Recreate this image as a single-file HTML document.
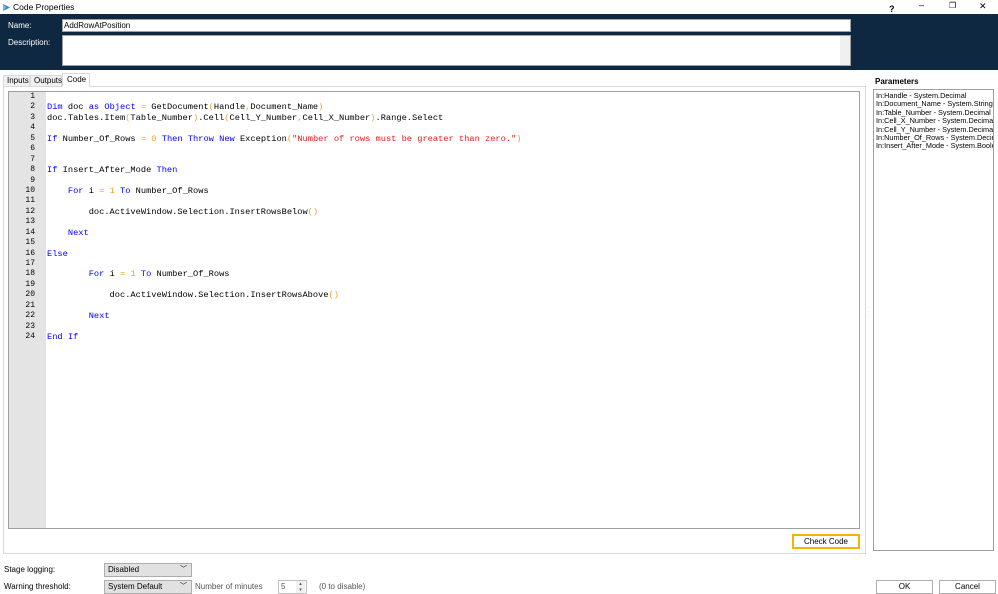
<!DOCTYPE html>
<html><head><style>
*{margin:0;padding:0;box-sizing:border-box}
body{width:998px;height:594px;background:#fff;position:relative;overflow:hidden;font-family:"Liberation Sans",sans-serif;font-size:8px;color:#000}
.a{position:absolute}
.hdr{left:0;top:14px;width:998px;height:56px;background:#0e2841}
.inp{background:#fff;border:1px solid #a0a0a0}
.code{font-family:"Liberation Mono",monospace;font-size:8px;line-height:10.43px;white-space:pre}
.sx{font-size:8.7px;line-height:10.43px}
.k{color:#0000ff}.o{color:#f0a030}.s{color:#e02020}
.btn{background:#fff;border:1px solid #adadad;text-align:center;line-height:12px;font-size:8px}
.sel{background:#e1e1e1;border:1px solid #adadad;padding-left:3px;line-height:12px;font-size:8px}
</style></head><body>
<svg class="a" style="left:2px;top:3px" width="9" height="9" viewBox="0 0 9 9"><path d="M1 1L8 4.5L1 8Z" fill="#2a8ad4"/><path d="M1 1L4 4.5L1 8Z" fill="#6fc0f0"/></svg>
<div class="a" style="left:13px;top:2px;font-size:8.5px">Code Properties</div>
<div class="a" style="left:889px;top:4px;font-size:9px;font-weight:bold">?</div>
<div class="a" style="left:919px;top:0px;font-size:9px">–</div>
<div class="a" style="left:949px;top:1px;font-size:8px">❐</div>
<div class="a" style="left:979px;top:1px;font-size:9px">✕</div>
<div class="a hdr"></div>
<div class="a" style="left:8px;top:21px;color:#fff">Name:</div>
<div class="a inp" style="left:62px;top:19px;width:789px;height:13px;padding-left:1px;line-height:11px">AddRowAtPosition</div>
<div class="a" style="left:8px;top:38px;color:#fff">Description:</div>
<div class="a inp" style="left:62px;top:35px;width:789px;height:31px"><div class="a" style="right:0;top:0;width:10px;height:29px;background:#f0f0f0"></div></div>
<div class="a" style="left:3px;top:86px;width:863px;height:468px;border:1px solid #d9d9d9"></div>
<div class="a" style="left:3px;top:75px;width:27px;height:12px;border:1px solid #d9d9d9;background:#f0f0f0;padding-left:3px;line-height:10px">Inputs</div>
<div class="a" style="left:30px;top:75px;width:32px;height:12px;border:1px solid #d9d9d9;background:#f0f0f0;padding-left:3px;line-height:10px">Outputs</div>
<div class="a" style="left:62px;top:73px;width:28px;height:14px;border:1px solid #d9d9d9;border-bottom:none;background:#fff;padding-left:4px;line-height:12px">Code</div>
<div class="a" style="left:8px;top:91px;width:852px;height:438px;border:1px solid #a0a0a0;background:#fff"></div>
<div class="a" style="left:9px;top:92px;width:37px;height:436px;background:#e4e4e4"></div>
<div class="a code" style="left:9px;top:92px;width:26px;text-align:right;color:#000">1
2
3
4
5
6
7
8
9
10
11
12
13
14
15
16
17
18
19
20
21
22
23
24</div>
<div class="a code sx" style="left:47px;top:92px"> 
<span class="k">Dim</span> doc <span class="k">as</span> <span class="k">Object</span> <span class="o">=</span> GetDocument<span class="o">(</span>Handle<span class="o">,</span>Document_Name<span class="o">)</span>
doc.Tables.Item<span class="o">(</span>Table_Number<span class="o">)</span>.Cell<span class="o">(</span>Cell_Y_Number<span class="o">,</span>Cell_X_Number<span class="o">)</span>.Range.Select

<span class="k">If</span> Number_Of_Rows <span class="o">=</span> <span class="o">0</span> <span class="k">Then</span> <span class="k">Throw</span> <span class="k">New</span> Exception<span class="o">(</span><span class="s">"Number of rows must be greater than zero."</span><span class="o">)</span>


<span class="k">If</span> Insert_After_Mode <span class="k">Then</span>

    <span class="k">For</span> i <span class="o">=</span> <span class="o">1</span> <span class="k">To</span> Number_Of_Rows

        doc.ActiveWindow.Selection.InsertRowsBelow<span class="o">()</span>

    <span class="k">Next</span>

<span class="k">Else</span>

        <span class="k">For</span> i <span class="o">=</span> <span class="o">1</span> <span class="k">To</span> Number_Of_Rows

            doc.ActiveWindow.Selection.InsertRowsAbove<span class="o">()</span>

        <span class="k">Next</span>

<span class="k">End</span> <span class="k">If</span></div>
<div class="a btn" style="left:792px;top:534px;width:68px;height:15px;border:2px solid #f5b400;line-height:11px">Check Code</div>
<div class="a" style="left:868px;top:306px;width:3px;height:14px;color:#bbb;font-size:6px;line-height:4px">·<br>·<br>·</div>
<div class="a" style="left:875px;top:77px;font-weight:bold;font-size:8px">Parameters</div>
<div class="a" style="left:873px;top:89px;width:121px;height:462px;border:1px solid #a0a0a0;overflow:hidden;white-space:nowrap;padding:2px 0 0 2px;line-height:8.4px;font-size:7.3px">In:Handle - System.Decimal<br>In:Document_Name - System.String<br>In:Table_Number - System.Decimal<br>In:Cell_X_Number - System.Decimal<br>In:Cell_Y_Number - System.Decimal<br>In:Number_Of_Rows - System.Decimal<br>In:Insert_After_Mode - System.Boolean</div>
<div class="a" style="left:4px;top:565px">Stage logging:</div>
<div class="a sel" style="left:104px;top:563px;width:88px;height:14px">Disabled<span style="position:absolute;right:4px;top:0;font-size:7px">﹀</span></div>
<div class="a" style="left:4px;top:582px">Warning threshold:</div>
<div class="a sel" style="left:104px;top:580px;width:88px;height:14px">System Default<span style="position:absolute;right:4px;top:0;font-size:7px">﹀</span></div>
<div class="a" style="left:195px;top:582px;color:#555">Number of minutes</div>
<div class="a" style="left:278px;top:580px;width:29px;height:14px;border:1px solid #c0c0c0;padding-left:2px;line-height:12px;color:#555">5<span style="position:absolute;right:1px;top:0;width:9px;height:12px;background:#f0f0f0;font-size:5px;line-height:6px;text-align:center">▴<br>▾</span></div>
<div class="a" style="left:319px;top:582px;color:#555">(0 to disable)</div>
<div class="a btn" style="left:876px;top:580px;width:57px;height:14px">OK</div>
<div class="a btn" style="left:939px;top:580px;width:57px;height:14px">Cancel</div>
</body></html>
